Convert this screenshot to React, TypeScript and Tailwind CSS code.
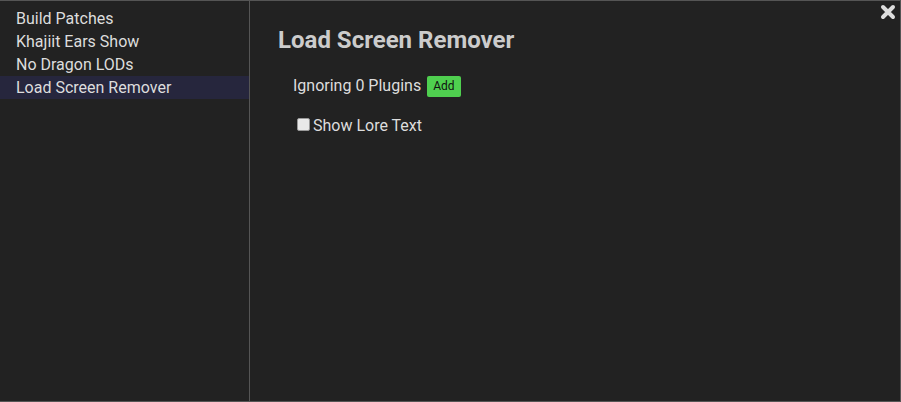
import React from "react";

const modules = [
  "Build Patches",
  "Khajiit Ears Show",
  "No Dragon LODs",
  "Load Screen Remover",
];

const App = () => {
  const selected = "Load Screen Remover";
  return (
    <div className="w-[901px] h-[402px] bg-[#222222] border-t border-r border-b border-[#555555] flex font-['Roboto',sans-serif] relative overflow-hidden">
      {/* sidebar */}
      <div className="w-[250px] shrink-0 border-r border-[#555555] pt-[6px] flex flex-col">
        {modules.map((m) => (
          <div
            key={m}
            className={`h-[23px] leading-[23px] pl-4 text-[16px] text-[#dddddd] ${
              m === selected ? "bg-[#26263d]" : ""
            }`}
          >
            {m}
          </div>
        ))}
      </div>

      {/* content */}
      <div className="flex-1 pl-[28px] pt-[25px]">
        <h1 className="text-[24px] font-bold text-[#cccccc] leading-[28px]">
          Load Screen Remover
        </h1>
        <div className="pl-[15px] mt-[20px] flex items-center gap-[6px] text-[16px] text-[#dddddd]">
          <span>Ignoring 0 Plugins</span>
          <button className="bg-[#4fcf4f] text-[#111111] text-[12px] leading-[21px] px-[6px] rounded-[2px]">
            Add
          </button>
        </div>
        <label className="pl-[19px] mt-[16px] flex items-center gap-[3px] text-[16px] text-[#dddddd]">
          <span className="w-[13px] h-[13px] bg-[#e9e9e9] border border-[#999999] rounded-[2px] -mt-[3px]" />
          <span>Show Lore Text</span>
        </label>
      </div>

      {/* close */}
      <button className="absolute right-[4px] top-[3px] text-[#dddddd]">
        <svg width="16" height="16" viewBox="0 0 16 16">
          <path
            d="M3 3 L13 13 M13 3 L3 13"
            stroke="currentColor"
            strokeWidth="4"
            strokeLinecap="round"
          />
        </svg>
      </button>
    </div>
  );
};

export default App;
